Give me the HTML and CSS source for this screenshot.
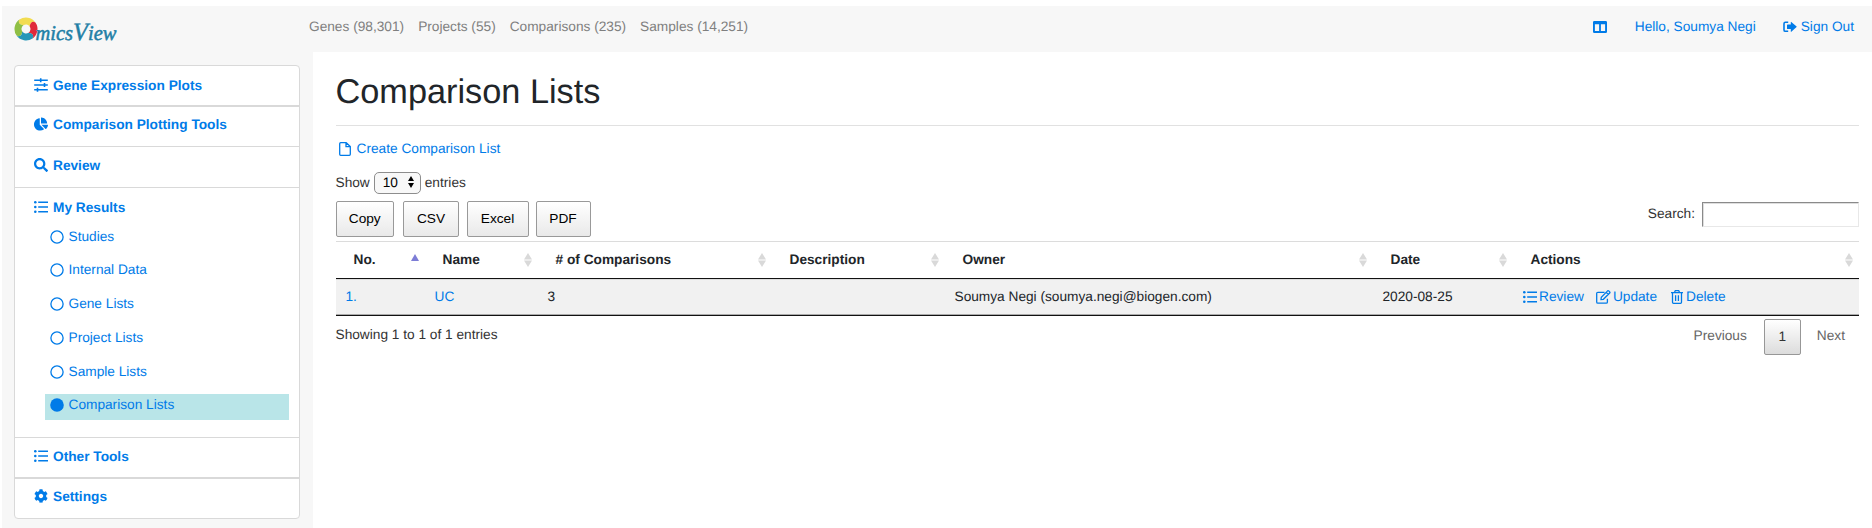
FILE: index.html
```html
<!DOCTYPE html>
<html lang="en">
<head>
<meta charset="utf-8">
<title>OmicsView - Comparison Lists</title>
<link rel="stylesheet" href="styles.css">
</head>
<body>
<svg width="0" height="0" class="sprite">
  <symbol id="petal" viewBox="0 0 24 30" overflow="visible"><path d="M12 3.500A11.500 11.500 0 0 1 23.500 15Q21 10.500 16.500 15A4.500 4.500 0 0 0 12 10.500Q7.500 6 12 3.500z"/></symbol>
  <symbol id="sliders" viewBox="0 0 14 14"><path d="M.2 2.200h13.600M.2 7h13.600M.2 11.800h13.600M6.700.2v4M10.500 5v4M3.500 9.800v4" fill="none" stroke="currentColor" stroke-width="1.600"/></symbol>
  <symbol id="pie" viewBox="0 0 544 512"><path d="M527.79 288H290.5l158.03 158.03c6.04 6.04 15.98 6.53 22.19.68 38.7-36.46 65.32-85.61 73.13-140.86 1.34-9.46-6.51-17.85-16.06-17.85zm-15.83-64.8C503.72 103.74 408.26 8.28 288.8.04 279.68-.59 272 7.1 272 16.24V240h223.77c9.14 0 16.82-7.68 16.19-16.8zM224 288V50.71c0-9.55-8.39-17.4-17.84-16.06C86.99 51.49-4.1 155.6.14 280.37 4.5 408.51 114.83 513.59 243.03 511.98c50.4-.63 96.97-16.87 135.26-44.03 7.9-5.6 8.42-17.23 1.57-24.08L224 288z"/></symbol>
  <symbol id="search" viewBox="0 0 512 512"><path d="M505 442.7L405.3 343c-4.5-4.5-10.6-7-17-7H372c27.6-35.3 44-79.7 44-128C416 93.1 322.9 0 208 0S0 93.1 0 208s93.1 208 208 208c48.3 0 92.7-16.4 128-44v16.3c0 6.4 2.5 12.5 7 17l99.7 99.7c9.4 9.4 24.6 9.4 33.9 0l28.3-28.3c9.4-9.4 9.4-24.6.1-34zM208 336c-70.7 0-128-57.2-128-128 0-70.7 57.2-128 128-128 70.7 0 128 57.2 128 128 0 70.7-57.2 128-128 128z"/></symbol>
  <symbol id="list" viewBox="0 0 14 14"><path d="M4.2 2.2H14M4.2 7H14M4.2 11.800H14" fill="none" stroke="currentColor" stroke-width="1.600"/><circle cx="1.300" cy="2.200" r="1.300"/><circle cx="1.300" cy="7" r="1.300"/><circle cx="1.300" cy="11.800" r="1.300"/></symbol>
  <symbol id="cog" viewBox="0 0 512 512"><path d="M487.4 315.7l-42.6-24.6c4.3-23.2 4.3-47 0-70.2l42.6-24.6c4.9-2.8 7.1-8.6 5.5-14-11.1-35.6-30-67.8-54.7-94.6-3.8-4.1-10-5.1-14.8-2.3L380.8 110c-17.9-15.4-38.5-27.3-60.8-35.1V25.8c0-5.6-3.9-10.5-9.4-11.7-36.7-8.2-74.3-7.8-109.2 0-5.500 1.200-9.400 6.100-9.400 11.700V75c-22.200 7.900-42.800 19.800-60.800 35.100L88.700 85.500c-4.900-2.800-11-1.900-14.800 2.300-24.700 26.700-43.600 58.900-54.700 94.600-1.700 5.400.6 11.200 5.500 14L67.300 221c-4.300 23.200-4.300 47 0 70.200l-42.600 24.600c-4.900 2.800-7.100 8.600-5.500 14 11.100 35.600 30 67.800 54.700 94.600 3.800 4.100 10 5.100 14.800 2.300l42.600-24.600c17.900 15.400 38.500 27.300 60.800 35.100v49.200c0 5.600 3.900 10.500 9.400 11.700 36.700 8.200 74.300 7.800 109.200 0 5.500-1.200 9.400-6.100 9.400-11.700v-49.200c22.200-7.900 42.800-19.800 60.800-35.100l42.600 24.600c4.900 2.800 11 1.900 14.800-2.300 24.700-26.700 43.600-58.900 54.700-94.600 1.500-5.500-.7-11.300-5.600-14.100zM256 336c-44.100 0-80-35.900-80-80s35.900-80 80-80 80 35.900 80 80-35.900 80-80 80z"/></symbol>
  <symbol id="circle" viewBox="0 0 14 14"><circle cx="7" cy="7" r="6.100" fill="none" stroke="currentColor" stroke-width="1.300"/></symbol>
  <symbol id="dot" viewBox="0 0 14 14"><circle cx="7" cy="7" r="6.800"/></symbol>
  <symbol id="columns" viewBox="0 0 14 12"><path fill-rule="evenodd" d="M1.300 0h11.400Q14 0 14 1.300v9.400q0 1.300-1.300 1.300H1.300Q0 12 0 10.700V1.300Q0 0 1.300 0zM1.900 3.200v6.900h4.200V3.200zM7.900 3.200v6.900h4.200V3.200z"/></symbol>
  <symbol id="signout" viewBox="0 0 14 12"><path d="M5.200 1.300H2.400Q1 1.300 1 2.700v6.200q0 1.400 1.400 1.400h2.800" fill="none" stroke="currentColor" stroke-width="1.600"/><path d="M8.300.9L13.600 5.500q.3.300 0 .6L8.300 10.800q-.5.300-.5-.3V8.100H4.600Q4 8.100 4 7.500V4.200q0-.6.6-.6h3.200V1.200q0-.6.5-.3z"/></symbol>
  <symbol id="file" viewBox="0 0 12 14"><path d="M1.700.7h5.500L11.300 4.500v7.800q0 1-1 1H1.700q-1 0-1-1V1.700q0-1 1-1zM7 .9v3.800h4" fill="none" stroke="currentColor" stroke-width="1.300"/></symbol>
  <symbol id="edit" viewBox="0 0 15 14"><path d="M8.500 2.300H1.900q-1.200 0-1.200 1.200v8.400q0 1.200 1.200 1.200h8.300q1.200 0 1.200-1.200V8.800M5 9.600l.3-2.400L11.600.9q.6-.4 1.100 0l1 1q.5.600 0 1.100L7.400 9.300zM10.200 2.400l2.100 2.100" fill="none" stroke="currentColor" stroke-width="1.300"/></symbol>
  <symbol id="trash" viewBox="0 0 12 14"><path d="M0 2.700h12M3.400 2.500L4.300.7h3.400l.9 1.800M1.500 3v9.300q0 1 1 1h7q1 0 1-1V3M4.600 5.300v5.800M7.400 5.300v5.800" fill="none" stroke="currentColor" stroke-width="1.300"/></symbol>
  <symbol id="sort" viewBox="0 0 8 14"><path d="M4 0l4 6.400H0zM0 7.600h8L4 14z"/></symbol>
</svg>
<div class="page">
  <header class="topbar">
    <a class="logo">
      <svg width="106" height="30" viewBox="0 0 106 30">
        <use href="#petal" width="24" height="30" fill="#f2dc50" transform="rotate(-35 12 15)"/>
        <use href="#petal" width="24" height="30" fill="#e0293a" transform="rotate(55 12 15)"/>
        <use href="#petal" width="24" height="30" fill="#2497b8" transform="rotate(145 12 15)"/>
        <use href="#petal" width="24" height="30" fill="#8fbf45" transform="rotate(235 12 15)"/>
        <text x="21.500" y="25.500" textLength="81" lengthAdjust="spacingAndGlyphs"><tspan class="logo-lower">mics</tspan><tspan class="logo-cap">V</tspan><tspan class="logo-lower">iew</tspan></text>
      </svg>
    </a>
    <nav class="counts"><a>Genes (98,301)</a><a>Projects (55)</a><a>Comparisons (235)</a><a>Samples (14,251)</a></nav>
    <nav class="user"><a><svg class="i-columns"><use href="#columns"/></svg></a><a>Hello, Soumya Negi</a><a><svg class="i-out"><use href="#signout"/></svg>Sign Out</a></nav>
  </header>
  <div class="body">
    <aside class="sidebar">
      <div class="menu">
        <section class="plots thick"><a class="head"><svg><use href="#sliders"/></svg>Gene Expression Plots</a></section>
        <section class="comparison"><a class="head"><svg><use href="#pie"/></svg>Comparison Plotting Tools</a></section>
        <section><a class="head"><svg><use href="#search"/></svg>Review</a></section>
        <section class="results"><a class="head"><svg><use href="#list"/></svg>My Results</a>
          <ul>
            <li><svg><use href="#circle"/></svg>Studies</li>
            <li><svg><use href="#circle"/></svg>Internal Data</li>
            <li><svg><use href="#circle"/></svg>Gene Lists</li>
            <li><svg><use href="#circle"/></svg>Project Lists</li>
            <li><svg><use href="#circle"/></svg>Sample Lists</li>
            <li class="active"><svg><use href="#dot"/></svg>Comparison Lists</li>
          </ul>
        </section>
        <section class="thick"><a class="head"><svg><use href="#list"/></svg>Other Tools</a></section>
        <section class="last"><a class="head"><svg><use href="#cog"/></svg>Settings</a></section>
      </div>
    </aside>
    <main>
      <h1>Comparison Lists</h1>
      <a class="create"><svg><use href="#file"/></svg>Create Comparison List</a>
      <div class="length">Show <span class="select">10<svg viewBox="0 0 8 14"><path d="M4 0l3.500 5.800h-7zM.5 8.200h7L4 14z"/></svg></span> entries</div>
      <div class="tools">
        <div class="buttons"><button class="copy">Copy</button><button class="csv">CSV</button><button class="excel">Excel</button><button class="pdf">PDF</button></div>
        <label class="filter">Search:<input type="text"></label>
      </div>
      <table>
        <colgroup><col class="c1"><col class="c2"><col class="c3"><col class="c4"><col class="c5"><col class="c6"><col class="c7"></colgroup>
        <thead><tr>
          <th><div>No.<svg class="asc" viewBox="0 0 8 7"><path d="M4 0l4 7H0z"/></svg></div></th>
          <th><div>Name<svg><use href="#sort"/></svg></div></th>
          <th><div># of Comparisons<svg><use href="#sort"/></svg></div></th>
          <th><div>Description<svg><use href="#sort"/></svg></div></th>
          <th><div>Owner<svg><use href="#sort"/></svg></div></th>
          <th><div>Date<svg><use href="#sort"/></svg></div></th>
          <th><div>Actions<svg><use href="#sort"/></svg></div></th>
        </tr></thead>
        <tbody><tr>
          <td><a>1.</a></td><td><a>UC</a></td><td>3</td><td></td><td>Soumya Negi (soumya.negi@biogen.com)</td><td>2020-08-25</td>
          <td><div class="actions"><a><svg class="i-list"><use href="#list"/></svg>Review</a><a><svg class="i-edit"><use href="#edit"/></svg>Update</a><a><svg class="i-trash"><use href="#trash"/></svg>Delete</a></div></td>
        </tr></tbody>
      </table>
      <footer><span>Showing 1 to 1 of 1 entries</span><div class="pager"><a>Previous</a><a class="current">1</a><a>Next</a></div></footer>
    </main>
  </div>
</div>
</body>
</html>
```
FILE: styles.css
```css
* { box-sizing: border-box; }
body {
  margin: 0;
  background: #fff;
  color: #212529;
  font: 13.7px/20px "Liberation Sans", Arial, sans-serif;
  text-rendering: geometricPrecision;
}
.sprite { position: absolute; }
svg { fill: currentColor; flex: none; }
a { color: #007be8; text-decoration: none; }
.page { height: 528px; padding: 6px 0 0 2px; display: flex; flex-direction: column; overflow: hidden; }

.topbar { height: 46px; background: #f7f7f7; display: flex; padding-right: 18px; }
.logo { width: 307px; padding: 8px 0 0 12px; }
.logo svg { display: block; }
.logo text { fill: #1f7fa6; stroke: #1f7fa6; stroke-width: .5px; font-family: "Liberation Serif", serif; font-style: italic; }
.logo-lower { font-size: 21px; }
.logo-cap { font-size: 25px; }
.counts { display: flex; gap: 14px; padding-top: 11px; }
.counts a { color: #7f7f7f; }
.user { display: flex; margin-left: auto; padding-top: 11px; }
.user a { display: flex; align-items: center; height: 20px; }
.user a + a { margin-left: 27px; }
.user a:first-child { margin-right: 1px; }
.i-columns { width: 14px; height: 12px; margin-top: -1px; }
.i-out { width: 14px; height: 12px; margin: -1px 4px 0 0; }

.body { flex: 1; display: flex; }
.sidebar { width: 311px; background: #f7f7f7; padding: 13px 13px 0 12px; }
.menu { background: #fff; border: 1px solid #d9d9d9; border-radius: 4px; height: 454px; }
.menu section { height: 41px; border-bottom: 1px solid #d9d9d9; padding: 9px 10px 0 19px; }
.menu section.thick { border-bottom-width: 2px; }
.menu section.plots { padding-top: 10px; }
.menu section.comparison { height: 40px; padding-top: 8px; }
.menu section.results { height: 250px; padding-top: 10px; }
.menu section.last { border: 0; padding-top: 8px; }
.head { display: flex; align-items: center; font-weight: bold; height: 20px; }
.head svg { width: 14px; height: 14px; margin: -2px 5px 0 0; }
.menu ul { list-style: none; margin: 7px 0 0 11px; padding: 0; }
.menu li { display: flex; align-items: center; height: 26px; margin-bottom: 7.8px; padding: 0 0 3px 4.5px; color: #007be8; }
.menu li svg { width: 14px; height: 14px; margin-right: 5px; }
.menu li.active { background: #b9e5e8; }

main { flex: 1; padding: 20px 13px 0 22.5px; }
h1 { margin: 0 0 13px; height: 54px; border-bottom: 1px solid #e1e1e1; font-size: 34.3px; line-height: 41px; font-weight: normal; }
.create { display: flex; align-items: center; height: 20px; }
.create svg { width: 12px; height: 14px; margin: 0 6px 0 3px; }
.length { display: flex; align-items: center; gap: 4px; margin-top: 13px; height: 22px; color: #333; }
.select { display: flex; align-items: center; width: 47px; height: 22px; padding-left: 8px; border: 1px solid #8d8d8d; border-radius: 5px; background: #f8f8f8; color: #000; }
.select svg { width: 8px; height: 12px; margin: -2px 0 0 9px; }
.tools { display: flex; justify-content: space-between; height: 47px; padding-top: 7px; }
.buttons { display: flex; gap: 8px; }
button { height: 36px; padding: 0; border: 1px solid #999; border-radius: 2px; background: linear-gradient(#fff, #e9e9e9); font: inherit; color: #000; }
.copy { width: 58.5px; }
.csv { width: 56px; margin-left: 1px; }
.excel { width: 62px; margin: 0 -1px 0 -.5px; }
.pdf { width: 55px; }
.filter { display: flex; align-items: center; height: 26px; gap: 7px; color: #333; }
.filter input { width: 157px; height: 25px; border: 1px solid #e8e8e8; border-top-color: #8a8a8a; border-left-color: #8a8a8a; background: #fff; box-shadow: inset 1px 1px 0 #dedede; }

table { width: 1523px; table-layout: fixed; border-collapse: separate; border-spacing: 0; }
.c1 { width: 89px; } .c2 { width: 113px; } .c3 { width: 234px; } .c4 { width: 173px; } .c5 { width: 428px; } .c6 { width: 140px; } .c7 { width: 346px; }
th { height: 38px; padding: 0 6px 0 18px; border-top: 1px solid #dcdcdc; border-bottom: 1px solid #111; text-align: left; }
th div { display: flex; align-items: center; justify-content: space-between; }
th svg { width: 8px; height: 14px; color: #d9d9d9; }
th svg.asc { height: 7px; color: #7d7dd6; margin-top: -6px; }
td { height: 37px; padding: 0 10px; background: #f1f1f1; border-bottom: 1px solid #111; box-shadow: inset 0 1px 0 #ddd, inset 0 -1px 0 #aaa; }
.actions { display: flex; }
.actions a { display: flex; align-items: center; margin-right: 12.5px; }
.i-list { width: 14px; height: 14px; margin: -1px 2.5px 0 0; }
.i-edit { width: 15px; height: 14px; margin-right: 1.5px; }
.i-trash { width: 12px; height: 14px; margin: 0 3px 0 1.5px; }

footer { display: flex; justify-content: space-between; color: #333; padding-top: 3px; }
footer > span { padding-top: 6px; }
.pager { display: flex; line-height: 34px; }
.pager a { color: #666; padding: 0 14px; }
.pager .current { width: 37px; height: 36px; margin: 0 2px 0 3px; padding: 0; text-align: center; color: #333; border: 1px solid #979797; border-radius: 2px; background: linear-gradient(#fff, #dcdcdc); }
```
